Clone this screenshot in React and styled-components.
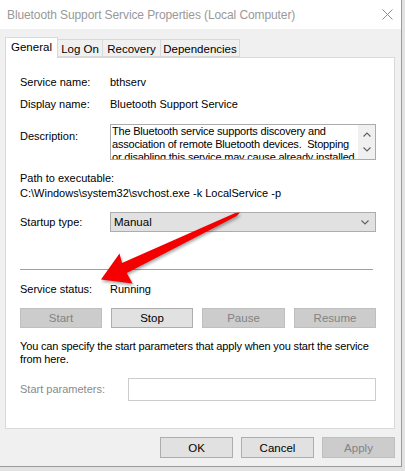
import React from "react";
import styled, { createGlobalStyle } from "styled-components";

const GlobalStyle = createGlobalStyle`
  body {
    margin: 0;
    background: #e2e2e2;
    font-family: "Liberation Sans", Arial, sans-serif;
    font-size: 11px;
    color: #000;
  }
`;

const Window = styled.div`
  position: relative;
  width: 402px;
  height: 467px;
  box-sizing: border-box;
  border-right: 1px solid #9b9b9b;
  border-bottom: 1px solid #9b9b9b;
  background: #f0f0f0;
  display: flex;
  flex-direction: column;
`;

const TitleBar = styled.div`
  height: 29px;
  flex-shrink: 0;
  background: #fff;
  display: flex;
  align-items: center;
  justify-content: space-between;
  padding: 0 8px 0 7px;
`;

const Title = styled.span`
  font-size: 12px;
  color: #999;
  letter-spacing: -0.1px;
`;

const Body = styled.div`
  padding: 8px 6px 0 5px;
  display: flex;
  flex-direction: column;
`;

const TabStrip = styled.div`
  display: flex;
  align-items: flex-end;
  height: 20px;
`;

const Tab = styled.div`
  position: relative;
  z-index: ${(p) => (p.$active ? 1 : 0)};
  box-sizing: border-box;
  width: ${(p) => p.$width}px;
  height: ${(p) => (p.$active ? 21 : 18)}px;
  margin-bottom: ${(p) => (p.$active ? -1 : 0)}px;
  padding-top: 3px;
  background: ${(p) => (p.$active ? "#fff" : "#f0f0f0")};
  border: 1px solid #d9d9d9;
  border-bottom: ${(p) => (p.$active ? "none" : "1px solid #d9d9d9")};
  margin-left: ${(p) => (p.$first ? 0 : -1)}px;
  text-align: center;
  font-size: 11.5px;
`;

const Panel = styled.div`
  box-sizing: border-box;
  width: 390px;
  height: 372px;
  background: #fff;
  border: 1px solid #d9d9d9;
  padding: 0 18px 0 14px;
  display: flex;
  flex-direction: column;
`;

const Row = styled.div`
  display: grid;
  grid-template-columns: ${(p) => p.$labelWidth || 90}px 1fr;
  align-items: ${(p) => (p.$top ? "start" : "center")};
  margin-top: ${(p) => p.$mt}px;
  line-height: 15px;
  min-height: 15px;
`;

const Label = styled.span`
  color: ${(p) => (p.$disabled ? "#8a8a8a" : "#000")};
  padding-top: ${(p) => p.$pt || 0}px;
`;

const Line = styled.div`
  margin-top: ${(p) => p.$mt || 0}px;
  line-height: ${(p) => p.$lh || 15}px;
  white-space: nowrap;
  letter-spacing: ${(p) => p.$ls || 0}px;
`;

const DescBox = styled.div`
  box-sizing: border-box;
  height: 36px;
  border: 1px solid #ababab;
  display: flex;
  overflow: hidden;
`;

const DescText = styled.div`
  flex: 1;
  padding-left: 1px;
  line-height: 13px;
  white-space: nowrap;
  letter-spacing: -0.2px;
`;

const ScrollTrack = styled.div`
  width: 17px;
  background: #f0f0f0;
  display: flex;
  flex-direction: column;
  align-items: center;
  justify-content: space-between;
  padding: 7px 0 7px;
  box-sizing: border-box;
`;

const Select = styled.div`
  box-sizing: border-box;
  height: 20px;
  background: #e1e1e1;
  border: 1px solid #adadad;
  display: flex;
  align-items: center;
  justify-content: space-between;
  padding: 0 6px 0 3px;
  font-size: 11.5px;
`;

const Separator = styled.div`
  height: 1px;
  width: 353px;
  background: #a0a0a0;
  margin-top: 37px;
`;

const ButtonRow = styled.div`
  display: flex;
  gap: 9px;
  margin-top: ${(p) => p.$mt || 0}px;
`;

const Button = styled.div`
  box-sizing: border-box;
  width: ${(p) => p.$width}px;
  height: ${(p) => p.$height || 20}px;
  display: flex;
  align-items: center;
  justify-content: center;
  background: ${(p) => (p.$disabled ? "#cccccc" : "#e1e1e1")};
  border: 1px solid ${(p) => (p.$disabled ? "#bfbfbf" : "#adadad")};
  color: ${(p) => (p.$disabled ? "#838383" : "#000")};
  font-size: 11.5px;
`;

const TextInput = styled.div`
  box-sizing: border-box;
  height: 23px;
  border: 1px solid #cccccc;
  background: #fff;
`;

const Footer = styled.div`
  margin-top: 8px;
  display: flex;
  justify-content: flex-end;
  gap: 8px;
  width: 390px;
`;

const Overlay = styled.svg`
  position: absolute;
  left: 0;
  top: 0;
  pointer-events: none;
  filter: drop-shadow(1px 2px 1.5px rgba(0, 0, 0, 0.35));
`;

const CloseIcon = () => (
  <svg width="11" height="11" viewBox="0 0 11 11">
    <path d="M0.5 0.5 L10.5 10.5 M10.5 0.5 L0.5 10.5" stroke="#8f8f8f" strokeWidth="1" fill="none" />
  </svg>
);

const Chevron = ({ up }) => (
  <svg width="8" height="5" viewBox="0 0 8 5">
    <polyline
      points={up ? "0.5,4.5 4,1 7.5,4.5" : "0.5,0.5 4,4 7.5,0.5"}
      stroke="#606060"
      strokeWidth="1.1"
      fill="none"
    />
  </svg>
);

const tabs = [
  { name: "General", width: 53, active: true },
  { name: "Log On", width: 46 },
  { name: "Recovery", width: 59 },
  { name: "Dependencies", width: 80 },
];

export default function App() {
  return (
    <>
      <GlobalStyle />
      <Window>
        <TitleBar>
          <Title>Bluetooth Support Service Properties (Local Computer)</Title>
          <CloseIcon />
        </TitleBar>
        <Body>
          <TabStrip>
            {tabs.map((t, i) => (
              <Tab key={t.name} $width={t.width} $active={t.active} $first={i === 0}>
                {t.name}
              </Tab>
            ))}
          </TabStrip>
          <Panel>
            <Row $mt={17}>
              <Label>Service name:</Label>
              <span>bthserv</span>
            </Row>
            <Row $mt={7}>
              <Label>Display name:</Label>
              <span>Bluetooth Support Service</span>
            </Row>
            <Row $mt={12} $top>
              <Label $pt={5}>Description:</Label>
              <DescBox>
                <DescText>
                  <div>The Bluetooth service supports discovery and</div>
                  <div>association of remote Bluetooth devices.&nbsp; Stopping</div>
                  <div>or disabling this service may cause already installed</div>
                </DescText>
                <ScrollTrack>
                  <Chevron up />
                  <Chevron />
                </ScrollTrack>
              </DescBox>
            </Row>
            <Line $mt={11}>Path to executable:</Line>
            <Line>C:\Windows\system32\svchost.exe -k LocalService -p</Line>
            <Row $mt={11}>
              <Label>Startup type:</Label>
              <Select>
                <span>Manual</span>
                <Chevron />
              </Select>
            </Row>
            <Separator />
            <Row $mt={12}>
              <Label>Service status:</Label>
              <span>Running</span>
            </Row>
            <ButtonRow $mt={11}>
              <Button $width={82} $disabled>Start</Button>
              <Button $width={82}>Stop</Button>
              <Button $width={83} $disabled>Pause</Button>
              <Button $width={82} $disabled>Resume</Button>
            </ButtonRow>
            <Line $mt={12} $lh={13} $ls={-0.15}>
              You can specify the start parameters that apply when you start the service
              <br />
              from here.
            </Line>
            <Row $mt={12} $labelWidth={108}>
              <Label $disabled>Start parameters:</Label>
              <TextInput />
            </Row>
          </Panel>
          <Footer>
            <Button $width={73} $height={21}>OK</Button>
            <Button $width={73} $height={21}>Cancel</Button>
            <Button $width={73} $height={21} $disabled>Apply</Button>
          </Footer>
        </Body>
        <Overlay width="402" height="467" viewBox="0 0 402 467">
          <polygon
            points="101,279.5 119.5,253.5 122,263.1 235.2,212.9 240,212.5 236.8,216.1 126.8,273.1 132.5,283.5"
            fill="#f40000"
          />
        </Overlay>
      </Window>
    </>
  );
}
